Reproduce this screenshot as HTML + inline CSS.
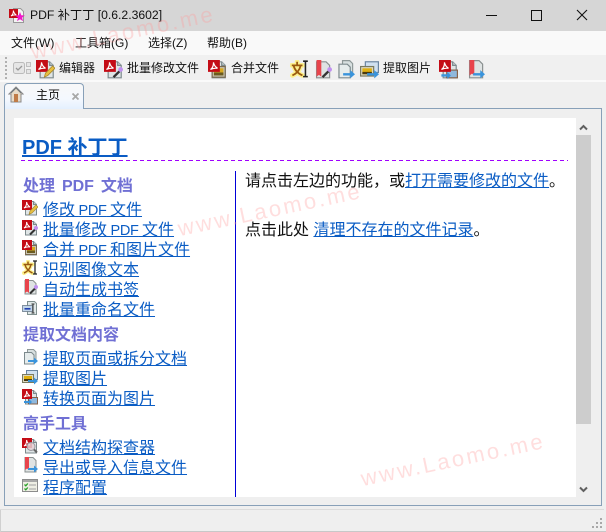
<!DOCTYPE html>
<html><head><meta charset="utf-8">
<style>
html,body{margin:0;padding:0}
body{width:606px;height:532px;overflow:hidden;position:relative;background:#efefef;font-family:"Liberation Sans","Noto Sans CJK SC",sans-serif;color:#000}
.a{position:absolute;white-space:nowrap}
.b{position:absolute}
.t{font-size:12px;line-height:16px;color:#111}
.lk{position:absolute;left:43px;font-size:16px;line-height:20px;white-space:nowrap;color:#0a5cc4;text-decoration:underline;text-underline-offset:1px;word-spacing:-1px}
.lt{font-size:14.5px;letter-spacing:-.3px}
.h{position:absolute;left:23px;font-size:16px;line-height:20px;white-space:nowrap;color:#7070d4;font-weight:bold;word-spacing:2.5px}
.i{position:absolute;width:16px;height:16px}
.ti{position:absolute;width:19px;height:19px;top:60px}
.wm{position:absolute;font-size:22px;letter-spacing:2.6px;color:#ff9a9a;opacity:.32;white-space:nowrap;transform:rotate(-11.8deg);transform-origin:0 100%;z-index:9;line-height:28px}
.u{color:#0a5cc4;text-decoration:underline;text-underline-offset:1px}
</style></head><body>
<svg width="0" height="0" style="position:absolute">
<defs>
<symbol id="pg" viewBox="0 0 16 16"><path d="M3.500 1.500h8l3 3v10.500h-11z" fill="#dfe5e6" stroke="#7d8a8d"/><path d="M11.500 1.500v3h3" fill="#c4ccce" stroke="#7d8a8d"/></symbol>
<symbol id="red" viewBox="0 0 16 16"><rect x="0" y="0" width="10" height="10" fill="#c40c16"/><path d="M2 8c2-1 2.800-4 2.600-6 .4 2 1.500 3.800 3.400 5-2-.3-4 0-6 1z" fill="none" stroke="#fff"/></symbol>
<symbol id="pen" viewBox="0 0 16 16"><path d="M7 14.500l1-3.500 6-6 2 2-6 6z" fill="#e8c040" stroke="#a88830" stroke-width=".7"/></symbol>
<symbol id="wand" viewBox="0 0 16 16"><path d="M8 14.500l5-5" stroke="#333" stroke-width="2"/><circle cx="14" cy="8" r="2" fill="#c090f0"/></symbol>
<symbol id="arr" viewBox="0 0 16 16"><path d="M6 11h6V8.500l4 3.500-4 3.500V13H6z" fill="#3a94dc"/></symbol>
<symbol id="img" viewBox="0 0 16 16"><rect x="3.500" y="5.500" width="11" height="9" fill="#c8c4b0" stroke="#7a6a50"/><rect x="5" y="7" width="8" height="6" fill="#d8a820"/><rect x="5" y="10.500" width="8" height="2.500" fill="#6a5a20"/></symbol>
<symbol id="e1" viewBox="0 0 16 16"><use href="#pg"/><use href="#red"/><use href="#pen"/></symbol>
<symbol id="e2" viewBox="0 0 16 16"><use href="#pg"/><use href="#red"/><use href="#wand"/></symbol>
<symbol id="e3" viewBox="0 0 16 16"><use href="#pg"/><use href="#img"/><use href="#red"/></symbol>
<symbol id="e4" viewBox="0 0 16 16"><path d="M1.500 4.500h9M6 1.500v3M3 4.500c1 4.500 4 7 7.500 8.500M9 4.500c-1 4.500-3.500 7-7 8.500" fill="none" stroke="#fdf08c" stroke-width="4" stroke-linecap="round"/><path d="M1.500 4.500h9M6 1.500v3M3 4.500c1 4.500 4 7 7.500 8.500M9 4.500c-1 4.500-3.500 7-7 8.500" fill="none" stroke="#9a5a10" stroke-width="1.500"/><path d="M11 1h4M13 1v13M11 14h4" fill="none" stroke="#222" stroke-width="1.300"/></symbol>
<symbol id="e5" viewBox="0 0 16 16"><path d="M3 1.500h8l3 3v10.500H3z" fill="#dfe3e3" stroke="#8a9090"/><path d="M3 0h4v14l-2-1.500L3 14z" fill="#e8444c"/><use href="#wand"/></symbol>
<symbol id="e6" viewBox="0 0 16 16"><path d="M5.500 1.500h7l2 2v11h-9z" fill="#dfe8e8" stroke="#80908f"/><rect x="0.500" y="5.500" width="10" height="6" fill="#c0d4e8" stroke="#6a7a8a" stroke-width=".8"/><rect x="2.500" y="8" width="6" height="1.600" fill="#2040b0"/><path d="M11 4v9M9.500 4h3M9.500 13h3" stroke="#333" fill="none"/></symbol>
<symbol id="e7" viewBox="0 0 16 16"><path d="M5.500.5h6l2.500 2.500v8H5.500z" fill="#d8e0e0" stroke="#8e9898"/><path d="M2.500 3.500h7l2.500 2.500v9H2.500z" fill="#e6ecec" stroke="#7d8a8d"/><use href="#arr"/></symbol>
<symbol id="e8" viewBox="0 0 16 16"><rect x="4.500" y="1.500" width="11" height="9" fill="#d0e0f0" stroke="#6a84a0"/><rect x=".5" y="5.500" width="11" height="8" fill="#dcd8c0" stroke="#7a7a60"/><rect x="2" y="7" width="8" height="5" fill="#e0b010"/><rect x="2" y="10" width="8" height="2" fill="#4a3a10"/><use href="#arr"/></symbol>
<symbol id="e9" viewBox="0 0 16 16"><use href="#pg"/><rect x="6.500" y="8.500" width="9" height="6.500" fill="#90b8dc" stroke="#86624a"/><use href="#red"/><path d="M2 12h5v-2l3 3-3 3v-2H2z" fill="#3a94dc"/></symbol>
<symbol id="e10" viewBox="0 0 16 16"><use href="#pg"/><use href="#red"/><circle cx="9" cy="8.500" r="4" fill="#e4d0d4" fill-opacity=".85" stroke="#98989f"/><path d="M12 11.500l3 3" stroke="#666" stroke-width="2"/></symbol>
<symbol id="e11" viewBox="0 0 16 16"><path d="M3 .5h8l3 3v11.500H3z" fill="#dfe3e3" stroke="#8a9090"/><path d="M3 0h4v13l-2-1.500L3 13z" fill="#e8444c"/><use href="#arr"/></symbol>
<symbol id="e12" viewBox="0 0 16 16"><rect x=".5" y="1.500" width="15" height="12" fill="#eeeee4" stroke="#8c8c8c"/><rect x="1" y="2" width="14" height="2" fill="#a8a8a8"/><path d="M2.500 6.500l1.300 1.300 2-2.300M2.500 10.500l1.300 1.300 2-2.300" fill="none" stroke="#28a028" stroke-width="1.300"/><path d="M7 7h7M7 11h7" stroke="#a0a0a0"/></symbol>
</defs>
</svg>

<!-- title bar -->
<div class="b" style="left:0;top:0;width:606px;height:31px;background:#d6d6d6"></div>
<svg class="b" style="left:9px;top:7px" width="17" height="17" viewBox="0 0 17 17"><path d="M4.500 1.500h7l3 3v11h-10z" fill="#f3f3f3" stroke="#999"/><rect x="0" y="2" width="9" height="9" fill="#c40c16"/><path d="M2 9c2-1 2.500-4 2.300-5.500 .4 2 1.500 3.500 3 4.500-2-.3-3.600 0-5.300 1z" fill="none" stroke="#fff"/><path d="M11 5l1.300 3.300 3.500.2-2.700 2.200 1 3.400-3.100-1.900-3 1.900 1-3.400-2.700-2.200 3.500-.2z" fill="#f018c8"/></svg>
<div class="a" style="left:30px;top:7px;font-size:12.2px;line-height:16px;color:#111">PDF 补丁丁 [0.6.2.3602]</div>
<div class="b" style="left:486px;top:15px;width:11px;height:1px;background:#111"></div>
<div class="b" style="left:531px;top:10px;width:9px;height:9px;border:1px solid #111"></div>
<svg class="b" style="left:576px;top:9px" width="12" height="12"><path d="M1 1l10 10M11 1L1 11" stroke="#111" stroke-width="1.100"/></svg>

<!-- menu -->
<div class="b" style="left:0;top:31px;width:606px;height:24px;background:#f9f9f9"></div>
<div class="a t" style="left:11px;top:35px">文件(W)</div>
<div class="a t" style="left:75px;top:35px">工具箱(G)</div>
<div class="a t" style="left:148px;top:35px">选择(Z)</div>
<div class="a t" style="left:207px;top:35px">帮助(B)</div>

<!-- toolbar -->
<div class="b" style="left:0;top:55px;width:606px;height:25px;background:#f0f0f0"></div>
<div class="b" style="left:0;top:80px;width:606px;height:2px;background:#fafafa"></div>
<div class="b" style="left:5px;top:57px;width:2px;height:22px;background:repeating-linear-gradient(#b0b0b0 0 2px,transparent 2px 4px)"></div>
<svg class="b" style="left:13px;top:61px" width="19" height="14"><rect x=".5" y="1.500" width="11" height="11" rx="2" fill="#e6e6e6" stroke="#bbb"/><path d="M3 7l2 2 4-4" fill="none" stroke="#999" stroke-width="1.300"/><rect x="13.500" y="1.500" width="4" height="4" fill="#e6e6e6" stroke="#c0c0c0"/><rect x="13.500" y="8.500" width="4" height="4" fill="#e6e6e6" stroke="#c0c0c0"/></svg>
<svg class="ti" style="left:36px"><use href="#e1"/></svg>
<div class="a t" style="left:59px;top:60px">编辑器</div>
<svg class="ti" style="left:104px"><use href="#e2"/></svg>
<div class="a t" style="left:127px;top:60px">批量修改文件</div>
<svg class="ti" style="left:208px"><use href="#e3"/></svg>
<div class="a t" style="left:231px;top:60px">合并文件</div>
<svg class="ti" style="left:290px"><use href="#e4"/></svg>
<svg class="ti" style="left:313px"><use href="#e5"/></svg>
<svg class="ti" style="left:336px"><use href="#e7"/></svg>
<svg class="ti" style="left:360px"><use href="#e8"/></svg>
<div class="a t" style="left:383px;top:60px">提取图片</div>
<svg class="ti" style="left:439px"><use href="#e9"/></svg>
<svg class="ti" style="left:466px"><use href="#e11"/></svg>

<!-- tab + panel -->
<div class="b" style="left:4px;top:108px;width:596px;height:396px;border:1px solid #88a0b8;background:#efefef"></div>
<div class="b" style="left:4px;top:83px;width:80px;height:26px;box-sizing:border-box;border:1px solid #88a0b8;border-bottom:none;border-radius:4px 4px 0 0;background:linear-gradient(#f8f8f8,#f4f8fe 60%,#e4f0fe)"></div>
<svg class="b" style="left:8px;top:86px" width="16" height="17" viewBox="0 0 16 17"><path d="M8 1L1 8h2v8h10V8h2z" fill="#e8dcc8" stroke="#8a8a8a"/><rect x="6" y="8" width="4" height="8" fill="#c07c48"/><path d="M3 7l5-5 5 5" fill="none" stroke="#70787c"/></svg>
<div class="a t" style="left:36px;top:87px">主页</div>
<svg class="b" style="left:72px;top:93px" width="7" height="7"><path d="M.5.5l6 6M6.500.5l-6 6" stroke="#a8a8a8" stroke-width="1.800"/></svg>

<!-- content -->
<div class="b" style="left:14px;top:118px;width:562px;height:379px;background:#fff"></div>
<div class="a" style="left:22px;top:136px;font-size:20px;line-height:24px;font-weight:bold;color:#0a5cc4;text-decoration:underline;text-underline-offset:1px">PDF 补丁丁</div>
<div class="b" style="left:21px;top:160px;width:547px;height:1px;background:repeating-linear-gradient(90deg,#a000ff 0 4px,transparent 4px 7px)"></div>
<div class="b" style="left:235px;top:171px;width:1px;height:326px;background:#0000d8"></div>

<div class="h" style="top:177px">处理 PDF 文档</div>
<svg class="i" style="left:22px;top:200px"><use href="#e1"/></svg><div class="lk" style="top:201px">修改 <span class="lt">PDF</span> 文件</div>
<svg class="i" style="left:22px;top:220px"><use href="#e2"/></svg><div class="lk" style="top:221px">批量修改 <span class="lt">PDF</span> 文件</div>
<svg class="i" style="left:22px;top:240px"><use href="#e3"/></svg><div class="lk" style="top:241px">合并 <span class="lt">PDF</span> 和图片文件</div>
<svg class="i" style="left:22px;top:260px"><use href="#e4"/></svg><div class="lk" style="top:261px">识别图像文本</div>
<svg class="i" style="left:22px;top:279px"><use href="#e5"/></svg><div class="lk" style="top:281px">自动生成书签</div>
<svg class="i" style="left:22px;top:300px"><use href="#e6"/></svg><div class="lk" style="top:301px">批量重命名文件</div>

<div class="h" style="top:326px">提取文档内容</div>
<svg class="i" style="left:22px;top:349px"><use href="#e7"/></svg><div class="lk" style="top:350px">提取页面或拆分文档</div>
<svg class="i" style="left:22px;top:369px"><use href="#e8"/></svg><div class="lk" style="top:370px">提取图片</div>
<svg class="i" style="left:22px;top:389px"><use href="#e9"/></svg><div class="lk" style="top:390px">转换页面为图片</div>

<div class="h" style="top:415px">高手工具</div>
<svg class="i" style="left:22px;top:438px"><use href="#e10"/></svg><div class="lk" style="top:439px">文档结构探查器</div>
<svg class="i" style="left:22px;top:457px"><use href="#e11"/></svg><div class="lk" style="top:459px">导出或导入信息文件</div>
<svg class="i" style="left:22px;top:478px"><use href="#e12"/></svg><div class="lk" style="top:479px">程序配置</div>

<div class="a" style="left:245px;top:172px;font-size:16px;line-height:20px;color:#111">请点击左边的功能，或<span class="u">打开需要修改的文件</span>。</div>
<div class="a" style="left:245px;top:221px;font-size:16px;line-height:20px;color:#111">点击此处 <span class="u">清理不存在的文件记录</span>。</div>

<!-- scrollbar -->
<div class="b" style="left:576px;top:135px;width:15px;height:289px;background:#cdcdcd"></div>
<svg class="b" style="left:579px;top:124px" width="9" height="7"><path d="M1 5.500l3.500-3.500 3.500 3.500" fill="none" stroke="#606060" stroke-width="2"/></svg>
<svg class="b" style="left:579px;top:486px" width="9" height="7"><path d="M1 1.500l3.500 3.500 3.500-3.500" fill="none" stroke="#606060" stroke-width="2"/></svg>

<!-- status bar -->
<div class="b" style="left:0;top:509px;width:604px;height:1px;background:#dcdcdc"></div>
<div class="b" style="left:0;top:531px;width:606px;height:1px;background:#c8c8c8"></div>
<div class="b" style="left:0;top:510px;width:1px;height:22px;background:#d0d0d0"></div>
<svg class="b" style="left:592px;top:518px" width="12" height="12" fill="#a8a8a8"><rect x="8" y="0" width="2" height="2"/><rect x="4" y="4" width="2" height="2"/><rect x="8" y="4" width="2" height="2"/><rect x="0" y="8" width="2" height="2"/><rect x="4" y="8" width="2" height="2"/><rect x="8" y="8" width="2" height="2"/></svg>

<!-- watermarks -->
<div class="wm" style="left:34px;top:38px">www.Laomo.me</div>
<div class="wm" style="left:181px;top:215px">www.Laomo.me</div>
<div class="wm" style="left:364px;top:465px">www.Laomo.me</div>
</body></html>
